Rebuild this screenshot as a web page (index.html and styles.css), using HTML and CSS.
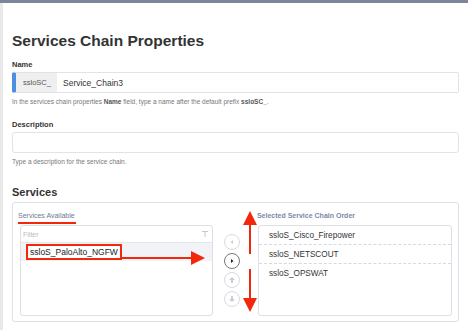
FILE: index.html
```html
<!DOCTYPE html>
<html lang="en">
<head>
    <meta charset="UTF-8">
    <title>Services Chain Properties</title>
    <link rel="stylesheet" href="styles.css">
</head>
<body>
    <div class="topbar"></div>
    <div class="page">
        <h1>Services Chain Properties</h1>

        <label class="field-label">Name</label>
        <div class="input prefixed">
            <span class="prefix">ssloSC_</span>
            <span class="value">Service_Chain3</span>
        </div>
        <p class="help">In the services chain properties <b>Name</b> field, type a name after the default prefix <b>ssloSC_</b>.</p>

        <label class="field-label">Description</label>
        <div class="input"></div>
        <p class="help">Type a description for the service chain.</p>

        <h2>Services</h2>
        <div class="services">
            <div class="col left-col">
                <div class="col-title"><span class="marked">Services Available</span></div>
                <div class="list">
                    <div class="filter">
                        <span>Filter</span>
                        <svg width="6" height="6" viewBox="0 0 6 6"><path d="M0 0h6v1H3.5v5h-1V1H0z" fill="#c4c8ce"/></svg>
                    </div>
                    <div class="item selected"><span class="boxed">ssloS_PaloAlto_NGFW</span></div>
                </div>
                <div class="arrow-right">
                    <svg width="85" height="14" viewBox="0 0 85 14"><path d="M0 6h71V0l14 7-14 7V8H0z" fill="#f2280c"/></svg>
                </div>
            </div>

            <div class="buttons">
                <span class="round"><svg width="6" height="6" viewBox="0 0 6 6"><path d="M4 1v4L1.5 3z" fill="#c9cdd3"/></svg></span>
                <span class="round active"><svg width="6" height="6" viewBox="0 0 6 6"><path d="M2 1v4l2.5-2z" fill="#222"/></svg></span>
                <span class="round"><svg width="8" height="8" viewBox="0 0 8 8"><path d="M4 1 1 4h2v3h2V4h2z" fill="#c9cdd3"/></svg></span>
                <span class="round"><svg width="8" height="8" viewBox="0 0 8 8"><path d="M4 7 1 4h2V1h2v3h2z" fill="#c9cdd3"/></svg></span>
            </div>

            <div class="col right-col">
                <div class="col-title">Selected Service Chain Order</div>
                <div class="list">
                    <div class="item">ssloS_Cisco_Firepower</div>
                    <div class="item">ssloS_NETSCOUT</div>
                    <div class="item">ssloS_OPSWAT</div>
                </div>
                <svg class="arrow-up" width="14" height="43" viewBox="0 0 14 43"><path d="M7 0l7 14H8v29H6V14H0z" fill="#f2280c"/></svg>
                <svg class="arrow-down" width="14" height="43" viewBox="0 0 14 43"><path d="M7 43l7-14H8V0H6v29H0z" fill="#f2280c"/></svg>
            </div>
        </div>
    </div>
</body>
</html>
```

FILE: styles.css
```css
body {
    margin: 0;
    font-family: "Liberation Sans", Arial, sans-serif;
    color: #333;
    background: #fff;
}
.topbar {
    height: 3px;
    background: #7b8798;
}
.page {
    border-left: 3px solid #e9e9e9;
    padding: 0 9px 0 9px;
    height: 327px;
    box-sizing: border-box;
}
h1 {
    margin: 0;
    padding-top: 28px;
    font-size: 15.5px;
    line-height: 20px;
    font-weight: bold;
    color: #333;
}
.field-label {
    display: block;
    margin-top: 9px;
    font-size: 7.5px;
    font-weight: bold;
    line-height: 9px;
}
.input {
    margin-top: 3px;
    height: 21px;
    border: 1px solid #e1e3e8;
    border-radius: 3px;
    box-sizing: border-box;
    display: flex;
    align-items: center;
}
.prefixed {
    border-left: 4px solid #4a90e2;
    border-radius: 2px;
}
.prefix {
    background: #efefef;
    align-self: stretch;
    display: flex;
    align-items: center;
    padding: 0 7px;
    font-size: 7.5px;
    color: #555;
    width: 27px;
}
.value {
    padding-left: 6px;
    font-size: 8.5px;
    color: #333;
}
.help {
    margin: 5px 0 0;
    font-size: 6.5px;
    line-height: 8px;
    color: #777;
}
.help b {
    color: #555;
}
.help + .field-label {
    margin-top: 14px;
}
h2 {
    margin: 20px 0 0;
    font-size: 11px;
    line-height: 12px;
    font-weight: bold;
}
.services {
    margin-top: 4px;
    border: 1px solid #dfe1e6;
    border-radius: 3px;
    height: 120px;
    box-sizing: border-box;
    display: flex;
    padding: 8px 6px 0 6px;
}
.col {
    position: relative;
}
.left-col {
    width: 195px;
}
.right-col {
    width: 196px;
}
.col-title {
    font-size: 7px;
    line-height: 10px;
    color: #6c7b96;
    height: 14px;
}
.right-col .col-title {
    font-weight: bold;
    color: #7b8aa8;
}
.marked {
    display: inline-block;
    border-bottom: 2px solid #f2280c;
    padding: 0 1px 1px 0;
    margin-left: -1px;
}
.list {
    margin-left: 1px;
    height: 91px;
    border: 1px solid #dcdfe4;
    border-radius: 3px;
    box-sizing: border-box;
}
.filter {
    height: 16px;
    border-bottom: 1px solid #e4e6ea;
    display: flex;
    align-items: center;
    justify-content: space-between;
    padding: 0 4px 0 2px;
    font-size: 7px;
    color: #b9bcc2;
}
.item {
    height: 18px;
    display: flex;
    align-items: center;
    padding-left: 10px;
    font-size: 8.2px;
    color: #333;
    border-bottom: 1px dashed #d6d9de;
}
.item:last-child {
    border-bottom: none;
}
.item.selected {
    background: #f1f3f6;
    padding-left: 5px;
    border-bottom: none;
}
.boxed {
    border: 2px solid #f2280c;
    padding: 1px 2px;
    font-size: 8.5px;
    background: #fff;
    color: #222;
}
.arrow-right {
    position: absolute;
    top: 40px;
    left: 101px;
    line-height: 0;
}
.buttons {
    width: 19px;
    margin: 23px 0 0 11px;
    display: flex;
    flex-direction: column;
    gap: 3px;
}
.round {
    width: 16px;
    height: 16px;
    border-radius: 50%;
    border: 1px solid #d8dbe0;
    display: flex;
    align-items: center;
    justify-content: center;
    box-sizing: border-box;
}
.round.active {
    border-color: #777;
}
.right-col {
    margin-left: 14px;
}
.arrow-up {
    position: absolute;
    left: -14px;
    top: 0;
}
.arrow-down {
    position: absolute;
    left: -14px;
    top: 58px;
}
```
